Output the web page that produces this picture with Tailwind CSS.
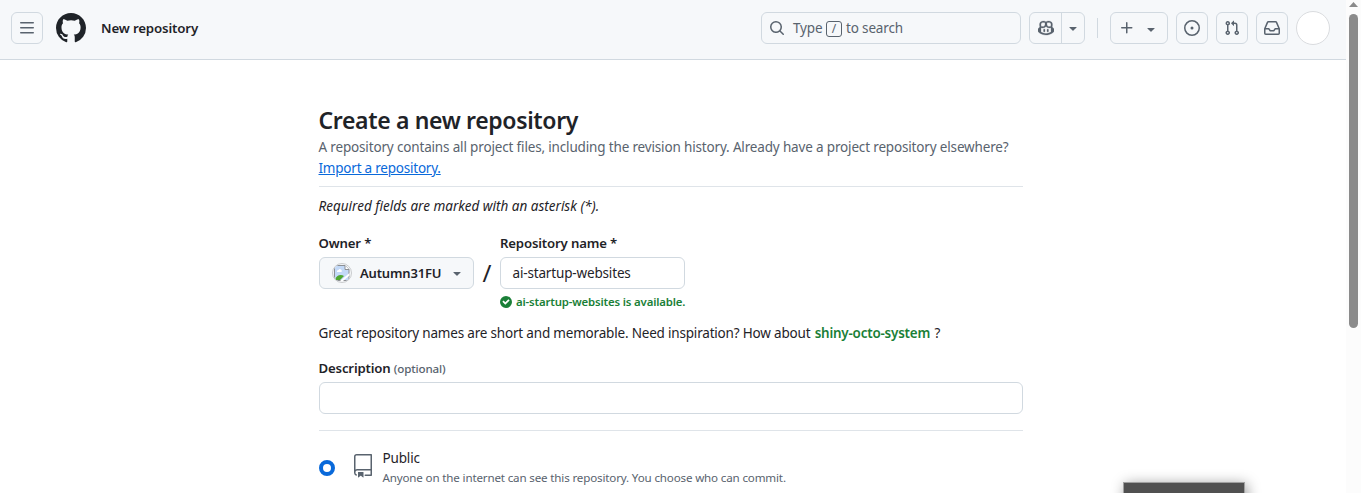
<!DOCTYPE html>
<html lang="en">
<head>
<meta charset="utf-8">
<title>New repository</title>
<script src="https://cdn.jsdelivr.net/npm/@tailwindcss/browser@4"></script>
</head>
<body class="flex h-[493px] overflow-hidden bg-white font-['Noto_Sans',sans-serif] text-[13.5px] leading-[21px] tracking-[-0.16px] text-[#1f2328]">
<div class="relative h-[493px] w-[1346px] shrink-0 overflow-hidden">
  <header class="flex h-[60px] items-start border-b border-[#d1d9e0] bg-[#f6f8fa] pl-[11px] pt-3 text-[#59636e]">
    <button class="flex size-8 items-center justify-center rounded-md border border-[#d1d9e0]">
      <svg class="size-4" viewBox="0 0 16 16" fill="currentColor"><path d="M1 2.75A.75.75 0 0 1 1.75 2h12.5a.75.75 0 0 1 0 1.5H1.75A.75.75 0 0 1 1 2.75Zm0 5A.75.75 0 0 1 1.75 7h12.5a.75.75 0 0 1 0 1.5H1.75A.75.75 0 0 1 1 7.75ZM1.75 12h12.5a.75.75 0 0 1 0 1.5H1.75a.75.75 0 0 1 0-1.5Z"/></svg>
    </button>
    <svg class="ml-[13px] mt-px size-[30px] text-[#1f2328]" viewBox="0 0 16 16" fill="currentColor"><path d="M8 0c4.42 0 8 3.58 8 8a8.013 8.013 0 0 1-5.45 7.59c-.4.08-.55-.17-.55-.38 0-.27.01-1.13.01-2.2 0-.75-.25-1.23-.54-1.48 1.78-.2 3.65-.88 3.65-3.95 0-.88-.31-1.59-.82-2.15.08-.2.36-1.02-.08-2.12 0 0-.67-.22-2.2.82-.64-.18-1.32-.27-2-.27-.68 0-1.36.09-2 .27-1.53-1.03-2.2-.82-2.2-.82-.44 1.1-.16 1.92-.08 2.12-.51.56-.82 1.28-.82 2.15 0 3.06 1.86 3.75 3.64 3.95-.23.2-.44.55-.51 1.07-.46.21-1.61.55-2.33-.66-.15-.24-.6-.83-1.23-.82-.67.01-.27.38.01.53.34.19.73.9.82 1.13.16.45.68 1.31 2.69.94 0 .67.01 1.3.01 1.49 0 .21-.15.45-.55.38A7.995 7.995 0 0 1 0 8c0-4.42 3.58-8 8-8Z"/></svg>
    <span class="ml-[15px] mt-1.5 text-[13.3px] font-semibold text-[#1f2328]">New repository</span>
    <div class="ml-auto flex">
      <div class="flex h-8 w-[260px] items-center rounded-md border border-[#d1d9e0] pl-[7px]">
        <svg class="size-4" viewBox="0 0 16 16" fill="currentColor"><path d="M10.68 11.74a6 6 0 0 1-7.922-8.982 6 6 0 0 1 8.982 7.922l3.04 3.04a.749.749 0 0 1-.326 1.275.749.749 0 0 1-.734-.215ZM11.5 7a4.499 4.499 0 1 0-8.997 0A4.499 4.499 0 0 0 11.5 7Z"/></svg>
        <span class="ml-2 w-[29px]">Type</span>
        <kbd class="mx-1 mt-px flex h-4 w-4 items-center justify-center rounded-[3px] border border-[#59636e] font-['Noto_Sans',sans-serif] text-xs leading-none">/</kbd>
        <span>to search</span>
      </div>
      <div class="ml-2 flex h-8 w-14 rounded-md border border-[#d1d9e0]">
        <span class="flex w-8 items-center justify-center border-r border-[#d1d9e0]"><svg class="size-4" viewBox="0 0 16 16" fill="currentColor" stroke="currentColor" stroke-width=".25"><path d="M7.998 15.035c-4.562 0-7.873-2.914-7.998-3.749V9.338c.085-.628.677-1.686 1.588-2.065.013-.07.024-.143.036-.218.029-.183.06-.384.126-.612-.201-.508-.254-1.084-.254-1.656 0-.87.128-1.769.693-2.484.579-.733 1.494-1.124 2.724-1.261 1.206-.134 2.262.034 2.944.765.05.053.096.108.139.165.044-.057.094-.112.143-.165.682-.731 1.738-.899 2.944-.765 1.23.137 2.145.528 2.724 1.261.566.715.693 1.614.693 2.484 0 .572-.053 1.148-.254 1.656.066.228.098.429.126.612.012.076.024.148.037.218.924.385 1.522 1.471 1.591 2.095v1.872c0 .766-3.351 3.795-8.002 3.795Zm0-1.485c2.28 0 4.584-1.11 5.002-1.433V7.862l-.023-.116c-.49.21-1.075.291-1.727.291-1.146 0-2.059-.327-2.71-.991A3.222 3.222 0 0 1 8 6.303a3.24 3.24 0 0 1-.544.743c-.65.664-1.563.991-2.71.991-.652 0-1.236-.081-1.727-.291l-.023.116v4.255c.419.323 2.722 1.433 5.002 1.433ZM6.762 2.83c-.193-.206-.637-.413-1.682-.297-1.019.113-1.479.404-1.713.7-.247.312-.369.789-.369 1.554 0 .793.129 1.171.308 1.371.162.181.519.379 1.442.379.853 0 1.339-.235 1.638-.54.315-.322.527-.827.617-1.553.117-.935-.037-1.395-.241-1.614Zm4.155-.297c-1.044-.116-1.488.091-1.681.297-.204.219-.359.679-.242 1.614.091.726.303 1.231.618 1.553.299.305.784.54 1.638.54.922 0 1.28-.198 1.442-.379.179-.2.308-.578.308-1.371 0-.765-.123-1.242-.37-1.554-.233-.296-.693-.587-1.713-.7Z"/><path d="M6.25 9.037a.75.75 0 0 1 .75.75v1.501a.75.75 0 0 1-1.5 0V9.787a.75.75 0 0 1 .75-.75Zm4.25.75v1.501a.75.75 0 0 1-1.5 0V9.787a.75.75 0 0 1 1.5 0Z"/></svg></span>
        <span class="flex flex-1 items-center justify-center"><svg class="size-4" viewBox="0 0 16 16" fill="currentColor"><path d="m4.427 7.427 3.396 3.396a.25.25 0 0 0 .354 0l3.396-3.396A.25.25 0 0 0 11.396 7H4.604a.25.25 0 0 0-.177.427Z"/></svg></span>
      </div>
      <div class="ml-3 mt-1.5 h-5 w-px bg-[#d1d9e0]"></div>
      <button class="ml-3 flex h-8 w-[58px] items-center rounded-md border border-[#d1d9e0] pl-2">
        <svg class="size-4" viewBox="0 0 16 16" fill="currentColor"><path d="M7.75 2a.75.75 0 0 1 .75.75V7h4.25a.75.75 0 0 1 0 1.5H8.5v4.25a.75.75 0 0 1-1.5 0V8.5H2.75a.75.75 0 0 1 0-1.5H7V2.75A.75.75 0 0 1 7.75 2Z"/></svg>
        <svg class="ml-2 mt-0.5 size-4" viewBox="0 0 16 16" fill="currentColor"><path d="m4.427 7.427 3.396 3.396a.25.25 0 0 0 .354 0l3.396-3.396A.25.25 0 0 0 11.396 7H4.604a.25.25 0 0 0-.177.427Z"/></svg>
      </button>
      <button class="ml-2 flex size-8 items-center justify-center rounded-md border border-[#d1d9e0]"><svg class="size-4" viewBox="0 0 16 16" fill="currentColor"><path d="M8 9.5a1.5 1.5 0 1 0 0-3 1.5 1.5 0 0 0 0 3Z"/><path d="M8 0a8 8 0 1 1 0 16A8 8 0 0 1 8 0ZM1.5 8a6.5 6.5 0 1 0 13 0 6.5 6.5 0 0 0-13 0Z"/></svg></button>
      <button class="ml-2 flex size-8 items-center justify-center rounded-md border border-[#d1d9e0]"><svg class="size-4" viewBox="0 0 16 16" fill="currentColor"><path d="M1.5 3.25a2.25 2.25 0 1 1 3 2.122v5.256a2.251 2.251 0 1 1-1.5 0V5.372A2.25 2.25 0 0 1 1.5 3.25Zm5.677-.177L9.573.677A.25.25 0 0 1 10 .854V2.5h1A2.5 2.5 0 0 1 13.5 5v5.628a2.251 2.251 0 1 1-1.5 0V5a1 1 0 0 0-1-1h-1v1.646a.25.25 0 0 1-.427.177L7.177 3.427a.25.25 0 0 1 0-.354ZM3.75 2.5a.75.75 0 1 0 0 1.5.75.75 0 0 0 0-1.5Zm0 9.5a.75.75 0 1 0 0 1.5.75.75 0 0 0 0-1.5Zm8.25.75a.75.75 0 1 0 1.5 0 .75.75 0 0 0-1.5 0Z"/></svg></button>
      <button class="ml-2 flex size-8 items-center justify-center rounded-md border border-[#d1d9e0]"><svg class="size-4" viewBox="0 0 16 16" fill="currentColor"><path d="M2.8 2.06A1.75 1.75 0 0 1 4.41 1h7.18c.7 0 1.333.417 1.61 1.06l2.74 6.395c.04.093.06.194.06.295v4.5A1.75 1.75 0 0 1 14.25 15H1.75A1.75 1.75 0 0 1 0 13.25v-4.5c0-.101.02-.202.06-.295Zm1.61.44a.25.25 0 0 0-.23.152L1.887 8H4.75a.75.75 0 0 1 .6.3L6.625 10h2.75l1.275-1.7a.75.75 0 0 1 .6-.3h2.863L11.82 2.652a.25.25 0 0 0-.23-.152Zm10.09 7h-2.875l-1.275 1.7a.75.75 0 0 1-.6.3h-3.5a.75.75 0 0 1-.6-.3L4.375 9.5H1.5v3.75c0 .138.112.25.25.25h12.5a.25.25 0 0 0 .25-.25Z"/></svg></button>
      <span class="-mt-px ml-2 mr-4 size-[34px] rounded-full border border-[#dadcdf] bg-white"></span>
    </div>
  </header>

  <main class="ml-[318.5px] w-[704.5px] pt-[42px]">
    <h1 class="text-[23px] leading-9 font-semibold tracking-[-0.35px]">Create a new repository</h1>
    <p class="-mt-px whitespace-nowrap text-[#59636e]">A repository contains all project files, including the revision history. Already have a project repository elsewhere?<br><a class="tracking-[-0.22px] text-[#0969da] underline">Import a repository.</a></p>
    <hr class="mt-[7px] border-[#d1d9e0]/70">
    <p class="mt-[9px] text-[13.5px] italic tracking-normal">Required fields are marked with an asterisk (*).</p>

    <div class="mt-4 flex">
      <div class="w-[155.5px]">
        <div class="text-[13.2px] font-semibold">Owner *</div>
        <button class="mt-[3px] ml-[0.5px] flex h-8 w-[155px] items-center rounded-md border border-[#d1d9e0] bg-[#f6f8fa] pl-3 font-semibold">
          <span class="flex size-5 items-center justify-center overflow-hidden rounded-full border border-[#c9cbcd] bg-[#f6f8fa]">
            <svg class="size-4 shrink-0" viewBox="0 0 16 16"><path d="M.5 .5h10.500l4 4v11h-14.500z" fill="#c3d9f7" stroke="#8c8f93"/><path d="M11 .5v4h4" fill="#fff" stroke="#8c8f93"/><path d="M3 7a1.500 1.500 0 0 1 1.500-2 1.800 1.800 0 0 1 3 2z" fill="#fff"/><path d="M1 15c1-5 6-6 9-4l-4 4z" fill="#4fa82f"/><path d="M6 16 15.500 8v2.500L9 16z" fill="#fff"/></svg>
          </span>
          <span class="ml-2 w-[81px] text-[13px]">Autumn31FU</span>
          <svg class="ml-2 size-4 text-[#59636e]" viewBox="0 0 16 16" fill="currentColor"><path d="m4.427 7.427 3.396 3.396a.25.25 0 0 0 .354 0l3.396-3.396A.25.25 0 0 0 11.396 7H4.604a.25.25 0 0 0-.177.427Z"/></svg>
        </button>
      </div>
      <span class="mt-6 w-[26px] text-center text-2xl leading-8">/</span>
      <div>
        <div class="text-[13.2px] font-semibold">Repository name *</div>
        <div class="mt-[3px] flex h-8 w-[185px] items-center rounded-md border border-[#d1d9e0] pl-[11.5px]">ai-startup-websites</div>
        <div class="mt-1 flex h-[18px] items-center gap-1 whitespace-nowrap text-[11.4px] font-semibold text-[#1a7f37]"><svg class="size-3" viewBox="0 0 12 12" fill="currentColor"><path d="M6 0a6 6 0 1 1 0 12A6 6 0 0 1 6 0Zm-.705 8.737L9.630 4.403 8.392 3.166 5.295 6.263l-1.700-1.702L2.356 5.800l2.938 2.938Z"/></svg><span class="-mt-px">ai-startup-websites is available.</span></div>
      </div>
    </div>

    <p class="mt-3 whitespace-nowrap tracking-[-0.19px]">Great repository names are short and memorable. Need inspiration? How about <span class="ml-px mr-px font-semibold text-[#1a7f37] text-[13.4px]">shiny-octo-system</span> ?</p>
    <div class="mt-[14px] text-[13.2px] font-semibold">Description <span class="text-[11.6px] font-medium text-[#59636e]">(optional)</span></div>
    <div class="mt-[3px] h-8 rounded-md border border-[#d1d9e0]"></div>
    <hr class="mt-4 border-[#d1d9e0]/70">
    <div class="mt-4 flex">
      <span class="mt-[13px] size-4 rounded-full border-4 border-[#0969da] bg-white"></span>
      <svg class="ml-4 mt-[7px] size-6 text-[#59636e]" viewBox="0 0 24 24" fill="currentColor"><path d="M3 2.750A2.750 2.750 0 0 1 5.750 0h14.500a.75.75 0 0 1 .75.75v20.500a.75.75 0 0 1-.75.75h-6a.75.75 0 0 1 0-1.500h5.250v-4H6A1.500 1.500 0 0 0 4.500 18v.75c0 .716.43 1.334 1.050 1.605a.75.75 0 0 1-.6 1.374A3.251 3.251 0 0 1 3 18.750ZM19.500 1.500H5.750c-.69 0-1.250.56-1.250 1.250v12.651A2.989 2.989 0 0 1 6 15h13.500Z"/><path d="M7 18.250a.25.25 0 0 1 .25-.25h5a.25.25 0 0 1 .25.25v5.010a.25.25 0 0 1-.397.201l-2.206-1.604a.25.25 0 0 0-.294 0L7.397 23.460a.25.25 0 0 1-.397-.2v-5.010Z"/></svg>
      <div class="ml-2">
        <div class="mt-px">Public</div>
        <div class="text-[11.6px] leading-[18px] text-[#59636e]">Anyone on the internet can see this repository. You choose who can commit.</div>
      </div>
    </div>
  </main>
  <div class="absolute left-[1123px] top-[482px] h-10 w-[122px] border border-[#a0a0a0] bg-[#505050] shadow-[2px_2px_14px_rgba(0,0,0,0.4)]"></div>
</div>
<div class="flex h-[493px] w-[15px] flex-col items-center bg-[#fcfcfc]">
  <svg class="mt-0.5 h-[5px] w-[9px]" viewBox="0 0 9 5"><path d="M4.500 0 9 5H0z" fill="#8b8b8b"/></svg>
  <div class="mt-[7px] h-[314px] w-[9px] rounded-full bg-[#8b8b8b]"></div>
</div>
</body>
</html>
